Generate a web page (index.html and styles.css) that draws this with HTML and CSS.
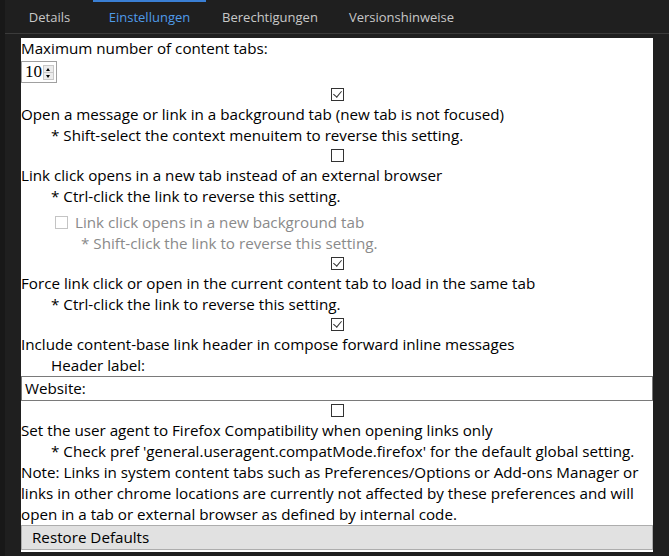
FILE: index.html
```html
<!DOCTYPE html>
<html>
<head>
<meta charset="utf-8">
<link rel="stylesheet" href="styles.css">
</head>
<body>
<div class="frame">
  <nav class="tabs">
    <div class="tab tab-details">Details</div>
    <div class="tab tab-settings active">Einstellungen</div>
    <div class="tab tab-perms">Berechtigungen</div>
    <div class="tab tab-notes">Versionshinweise</div>
  </nav>
  <main class="panel">
    <div class="line">Maximum number of content tabs:</div>
    <div class="numbox">
      <span class="numval">10</span>
      <span class="spinner">
        <span class="spin up"></span>
        <span class="spin down"></span>
      </span>
    </div>

    <div class="cbrow"><span class="cb checked"></span></div>
    <div class="line">Open a message or link in a background tab (new tab is not focused)</div>
    <div class="line indent">* Shift-select the context menuitem to reverse this setting.</div>

    <div class="cbrow"><span class="cb"></span></div>
    <div class="line">Link click opens in a new tab instead of an external browser</div>
    <div class="line indent">* Ctrl-click the link to reverse this setting.</div>

    <div class="line disabled sub"><span class="cb cb-disabled"></span><span>Link click opens in a new background tab</span></div>
    <div class="line disabled subnote">* Shift-click the link to reverse this setting.</div>

    <div class="cbrow"><span class="cb checked"></span></div>
    <div class="line">Force link click or open in the current content tab to load in the same tab</div>
    <div class="line indent">* Ctrl-click the link to reverse this setting.</div>

    <div class="cbrow"><span class="cb checked"></span></div>
    <div class="line">Include content-base link header in compose forward inline messages</div>
    <div class="line indent">Header label:</div>
    <div class="textbox">Website:</div>

    <div class="cbrow"><span class="cb"></span></div>
    <div class="line">Set the user agent to Firefox Compatibility when opening links only</div>
    <div class="line indent">* Check pref 'general.useragent.compatMode.firefox' for the default global setting.</div>
    <div class="line note">Note: Links in system content tabs such as Preferences/Options or Add-ons Manager or links in other chrome locations are currently not affected by these preferences and will open in a tab or external browser as defined by internal code.</div>

    <div class="button">Restore Defaults</div>
  </main>
</div>
</body>
</html>
```

FILE: styles.css
```css
html, body {
  margin: 0;
  padding: 0;
}
body {
  background: #1f1f1f;
  width: 669px;
  height: 556px;
  overflow: hidden;
  font-family: "Open Sans", "Noto Sans", sans-serif;
}
.frame {
  border-left: 5px solid #181818;
  height: 556px;
  box-sizing: border-box;
}
.tabs {
  display: flex;
  height: 33px;
  border-bottom: 1px solid #3b3b3b;
  padding-left: 8px;
  box-sizing: content-box;
}
.tab {
  box-sizing: border-box;
  height: 33px;
  border-top: 2px solid transparent;
  display: flex;
  align-items: center;
  justify-content: center;
  color: #c8c8c8;
  font-size: 13px;
  padding-bottom: 1px;
}
.tab-details { width: 73px; margin-right: 7px; }
.tab-settings { width: 113px; }
.tab-perms { width: 128px; }
.tab-notes { width: 135px; }
.tab.active {
  border-top-color: #3a7fd4;
  color: #4f9be8;
}
.panel {
  margin: 4px 0 0 16px;
  width: 632px;
  background: #ffffff;
  color: #000000;
  font-size: 15.2px;
  padding-bottom: 2px;
}
.line {
  line-height: 21px;
  height: 21px;
  white-space: nowrap;
}
.indent {
  padding-left: 30px;
}
.note {
  white-space: normal;
  height: auto;
}
.cbrow {
  height: 19px;
  display: flex;
  align-items: center;
  justify-content: center;
}
.cb {
  display: inline-block;
  width: 13px;
  height: 13px;
  box-sizing: border-box;
  border: 1px solid #333333;
  background: #ffffff;
  position: relative;
}
.cb.checked::after {
  content: "";
  position: absolute;
  left: 3px;
  top: 0px;
  width: 4px;
  height: 7px;
  border-right: 1px solid #333333;
  border-bottom: 1px solid #333333;
  transform: rotate(40deg);
}
.cb-disabled {
  border-color: #c4c4c4;
  margin-right: 7px;
}
.disabled {
  color: #8a8a8a;
}
.sub {
  margin-top: 5px;
  padding-left: 34px;
  display: flex;
  align-items: center;
}
.subnote {
  padding-left: 60px;
}
.numbox {
  margin: 2px 0;
  width: 36px;
  height: 22px;
  box-sizing: border-box;
  border: 1px solid #a0a0a0;
  display: flex;
  align-items: center;
  padding-left: 3px;
}
.numval {
  font-family: "Liberation Serif", serif;
  font-size: 17px;
  line-height: 18px;
}
.spinner {
  margin-left: 1px;
  width: 11px;
  height: 15px;
  display: flex;
  flex-direction: column;
  border: 1px solid #c8c8c8;
  box-sizing: border-box;
}
.spin {
  flex: 1;
  background: #ececec;
  position: relative;
}
.spin.up { border-bottom: 1px solid #c8c8c8; }
.spin.up::after, .spin.down::after {
  content: "";
  position: absolute;
  left: 2px;
  border-left: 2.5px solid transparent;
  border-right: 2.5px solid transparent;
}
.spin.up::after {
  top: 2px;
  border-bottom: 3px solid #000;
}
.spin.down::after {
  top: 2px;
  border-top: 3px solid #000;
}
.textbox {
  height: 25px;
  box-sizing: border-box;
  border: 1px solid #7a7a7a;
  padding-left: 3px;
  line-height: 23px;
}
.button {
  height: 25px;
  box-sizing: border-box;
  border: 1px solid #adadad;
  background: #e1e1e1;
  padding-left: 10px;
  line-height: 23px;
}
```
